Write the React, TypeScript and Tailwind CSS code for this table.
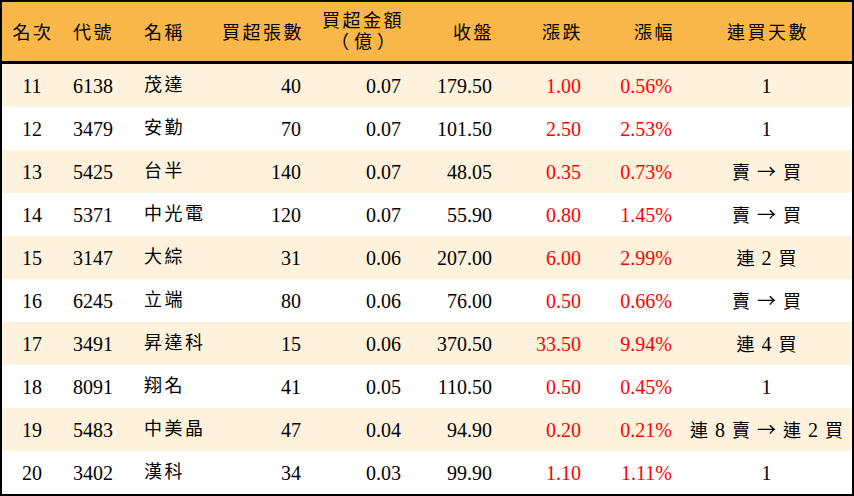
import React from 'react';

type Row = {
  rank: number;
  code: string;
  name: string;
  shares: number;
  amount: string;
  close: string;
  change: string;
  pct: string;
  streak: string;
};

const rows: Row[] = [
  { rank: 11, code: '6138', name: '茂達', shares: 40, amount: '0.07', close: '179.50', change: '1.00', pct: '0.56%', streak: '1' },
  { rank: 12, code: '3479', name: '安勤', shares: 70, amount: '0.07', close: '101.50', change: '2.50', pct: '2.53%', streak: '1' },
  { rank: 13, code: '5425', name: '台半', shares: 140, amount: '0.07', close: '48.05', change: '0.35', pct: '0.73%', streak: '賣 → 買' },
  { rank: 14, code: '5371', name: '中光電', shares: 120, amount: '0.07', close: '55.90', change: '0.80', pct: '1.45%', streak: '賣 → 買' },
  { rank: 15, code: '3147', name: '大綜', shares: 31, amount: '0.06', close: '207.00', change: '6.00', pct: '2.99%', streak: '連 2 買' },
  { rank: 16, code: '6245', name: '立端', shares: 80, amount: '0.06', close: '76.00', change: '0.50', pct: '0.66%', streak: '賣 → 買' },
  { rank: 17, code: '3491', name: '昇達科', shares: 15, amount: '0.06', close: '370.50', change: '33.50', pct: '9.94%', streak: '連 4 買' },
  { rank: 18, code: '8091', name: '翔名', shares: 41, amount: '0.05', close: '110.50', change: '0.50', pct: '0.45%', streak: '1' },
  { rank: 19, code: '5483', name: '中美晶', shares: 47, amount: '0.04', close: '94.90', change: '0.20', pct: '0.21%', streak: '連 8 賣 → 連 2 買' },
  { rank: 20, code: '3402', name: '漢科', shares: 34, amount: '0.03', close: '99.90', change: '1.10', pct: '1.11%', streak: '1' },
];

const cols = 'grid grid-cols-[60px_72px_76px_101px_100px_91px_89px_91px_170px]';

// CJK glyphs a little smaller than the digits, like the kai face in the original
function Mixed({ text }: { text: string }) {
  return (
    <>
      {text.split('').map((ch, i) => {
        if (/[\u4e00-\u9fff]/.test(ch)) return <span key={i} className="text-[18px]">{ch}</span>;
        if (ch === '→') return <span key={i} className="text-[19px] font-['Noto_Sans_CJK_TC',sans-serif]">{ch}</span>;
        return <span key={i}>{ch}</span>;
      })}
    </>
  );
}

export default function App() {
  return (
    <div className="w-[854px] h-[496px] border-2 border-black bg-white text-black text-[20px] font-['Liberation_Serif','Noto_Sans_CJK_TC',serif]">
      {/* header */}
      <div className={`${cols} h-[62px] bg-[#f9b74a] border-b-[3px] border-black items-center text-[18px] tracking-[2.5px] leading-[20px]`}>
        <div className="text-center pl-[2px] pt-[2px]">名次</div>
        <div className="pl-[11px] pt-[2px]">代號</div>
        <div className="pl-[10px] pt-[2px]">名稱</div>
        <div className="text-right pr-[7px] pt-[2px]">買超張數</div>
        <div className="flex justify-end pr-[7px]">
          <div className="flex flex-col items-center leading-[21px]">
            <span>買超金額</span>
            <span className="tracking-[5px] pl-[5px]">（億）</span>
          </div>
        </div>
        <div className="text-right pr-[8px] pt-[2px]">收盤</div>
        <div className="text-right pr-[8px] pt-[2px]">漲跌</div>
        <div className="text-right pr-[7px] pt-[2px]">漲幅</div>
        <div className="text-center pl-[2px] pt-[2px]">連買天數</div>
      </div>

      {/* rows */}
      {rows.map((r, i) => (
        <div
          key={r.rank}
          className={`${cols} h-[43px] items-center ${i % 2 === 0 ? 'bg-[#fef2dd]' : 'bg-white'}`}
        >
          <div className="text-center">{r.rank}</div>
          <div className="pl-[11px]">{r.code}</div>
          <div className="pl-[10px] text-[18px] tracking-[2.5px]">{r.name}</div>
          <div className="text-right pr-[10px]">{r.shares}</div>
          <div className="text-right pr-[10px]">{r.amount}</div>
          <div className="text-right pr-[10px]">{r.close}</div>
          <div className="text-right pr-[10px] text-[#ff0000]">{r.change}</div>
          <div className="text-right pr-[10px] text-[#ff0000]">{r.pct}</div>
          <div className="text-center tracking-[1px] whitespace-pre">
            <Mixed text={r.streak} />
          </div>
        </div>
      ))}
    </div>
  );
}
